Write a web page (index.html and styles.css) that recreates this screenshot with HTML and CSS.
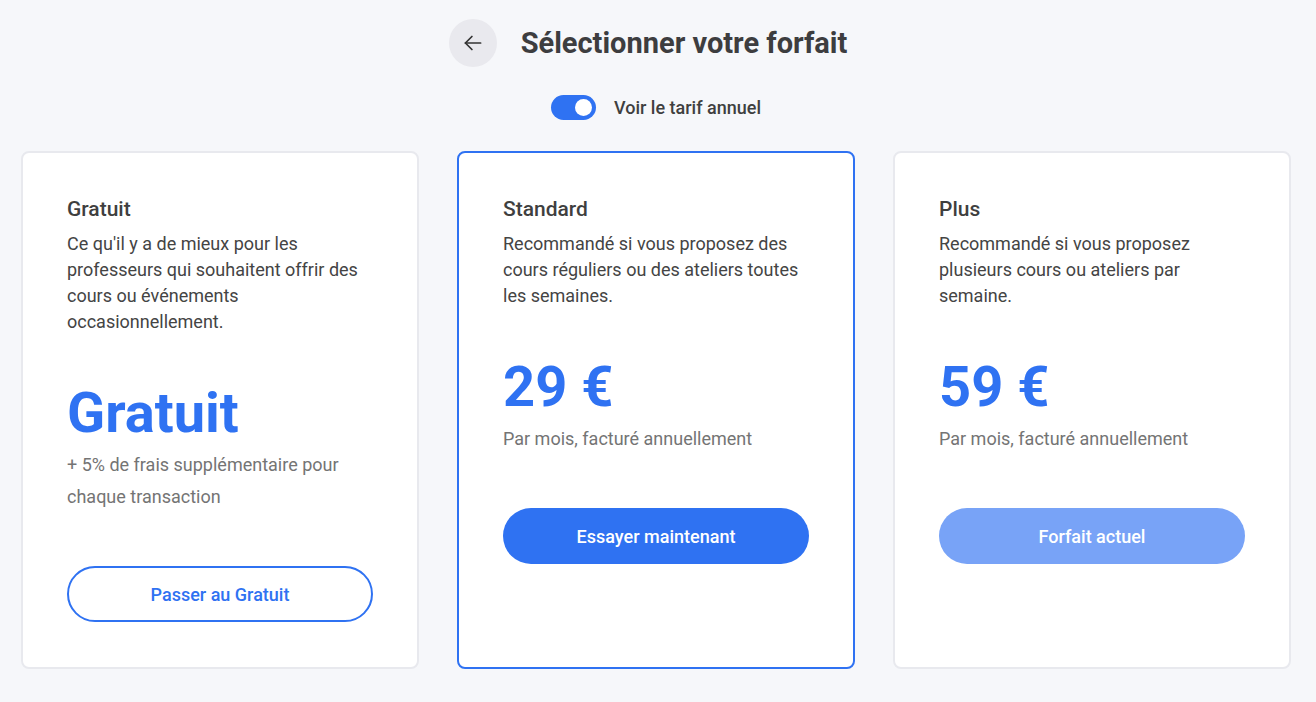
FILE: index.html
```html
<!DOCTYPE html>
<html lang="fr">
<head>
<meta charset="utf-8">
<link rel="stylesheet" href="styles.css">
</head>
<body>
<div class="page">
  <header class="header">
    <button class="back" aria-label="Retour">
      <svg width="26" height="26" viewBox="0 0 24 24" fill="none" stroke="#333" stroke-width="1.6" stroke-linecap="round" stroke-linejoin="round"><path d="M19 12H5"/><path d="M11 6l-6 6 6 6"/></svg>
    </button>
    <h1 class="title">Sélectionner votre forfait</h1>
  </header>
  <div class="toggle-row">
    <span class="toggle"><span class="knob"></span></span>
    <span class="toggle-label">Voir le tarif annuel</span>
  </div>
  <div class="cards">
    <div class="card">
      <h2 class="card-title">Gratuit</h2>
      <p class="card-desc">Ce qu'il y a de mieux pour les professeurs qui souhaitent offrir des cours ou événements occasionnellement.</p>
      <div class="price">Gratuit</div>
      <p class="price-note">+ 5% de frais supplémentaire pour chaque transaction</p>
      <button class="btn btn-outline">Passer au Gratuit</button>
    </div>
    <div class="card card-selected">
      <h2 class="card-title">Standard</h2>
      <p class="card-desc">Recommandé si vous proposez des cours réguliers ou des ateliers toutes les semaines.</p>
      <div class="price">29 €</div>
      <p class="price-note">Par mois, facturé annuellement</p>
      <button class="btn btn-primary">Essayer maintenant</button>
    </div>
    <div class="card">
      <h2 class="card-title">Plus</h2>
      <p class="card-desc">Recommandé si vous proposez plusieurs cours ou ateliers par semaine.</p>
      <div class="price">59 €</div>
      <p class="price-note">Par mois, facturé annuellement</p>
      <button class="btn btn-disabled">Forfait actuel</button>
    </div>
  </div>
</div>
</body>
</html>
```

FILE: styles.css
```css
* { box-sizing: border-box; }
html, body { margin: 0; padding: 0; }
body {
  background: #f6f7fa;
  font-family: Roboto, "Liberation Sans", Arial, sans-serif;
  color: #3f3f3f;
  width: 1316px;
  height: 702px;
  overflow: hidden;
}
.page { padding-top: 19px; }
.header {
  display: flex;
  align-items: center;
  justify-content: center;
  gap: 24px;
  padding-right: 20px;
}
.back {
  width: 48px;
  height: 48px;
  border-radius: 50%;
  border: none;
  background: #e9e9ee;
  display: flex;
  align-items: center;
  justify-content: center;
  padding: 0;
}
.title {
  margin: 0;
  font-size: 29px;
  font-weight: 700;
  color: #3d3d3f;
}
.toggle-row {
  display: flex;
  align-items: center;
  justify-content: center;
  gap: 18px;
  margin-top: 28px;
  padding-right: 4px;
}
.toggle {
  width: 45px;
  height: 25px;
  border-radius: 13px;
  background: #2f72f2;
  display: flex;
  align-items: center;
  justify-content: flex-end;
  padding-right: 4px;
}
.knob {
  width: 17px;
  height: 17px;
  border-radius: 50%;
  background: #fff;
}
.toggle-label {
  font-size: 18px;
  font-weight: 500;
  color: #3f3f3f;
}
.cards {
  display: flex;
  gap: 38px;
  padding-left: 21px;
  margin-top: 31px;
}
.card {
  width: 398px;
  height: 518px;
  background: #fff;
  border: 2px solid #e8e9ee;
  border-radius: 8px;
  padding: 43px 44px 0 44px;
  display: flex;
  flex-direction: column;
}
.card-selected { border-color: #2f72f2; }
.card-title {
  margin: 0;
  font-size: 21px;
  font-weight: 500;
  line-height: 26px;
  color: #3f3f3f;
}
.card-desc {
  margin: 9px 0 0 0;
  font-size: 18px;
  line-height: 26px;
  color: #444;
}
.price {
  margin-top: 40px;
  font-size: 56px;
  font-weight: 700;
  line-height: 76px;
  color: #2f72f2;
}
.price-note {
  margin: -2px 0 0 0;
  font-size: 18px;
  line-height: 32px;
  color: #747474;
}
.btn {
  margin-top: 53px;
  width: 306px;
  height: 56px;
  border-radius: 28px;
  font-family: inherit;
  font-size: 18px;
  font-weight: 500;
  border: 2px solid transparent;
}
.btn-outline { background: #fff; border-color: #2f72f2; color: #2f72f2; }
.btn-primary { background: #2f72f2; color: #fff; }
.btn-disabled { background: #78a3f7; color: #fff; }
```
